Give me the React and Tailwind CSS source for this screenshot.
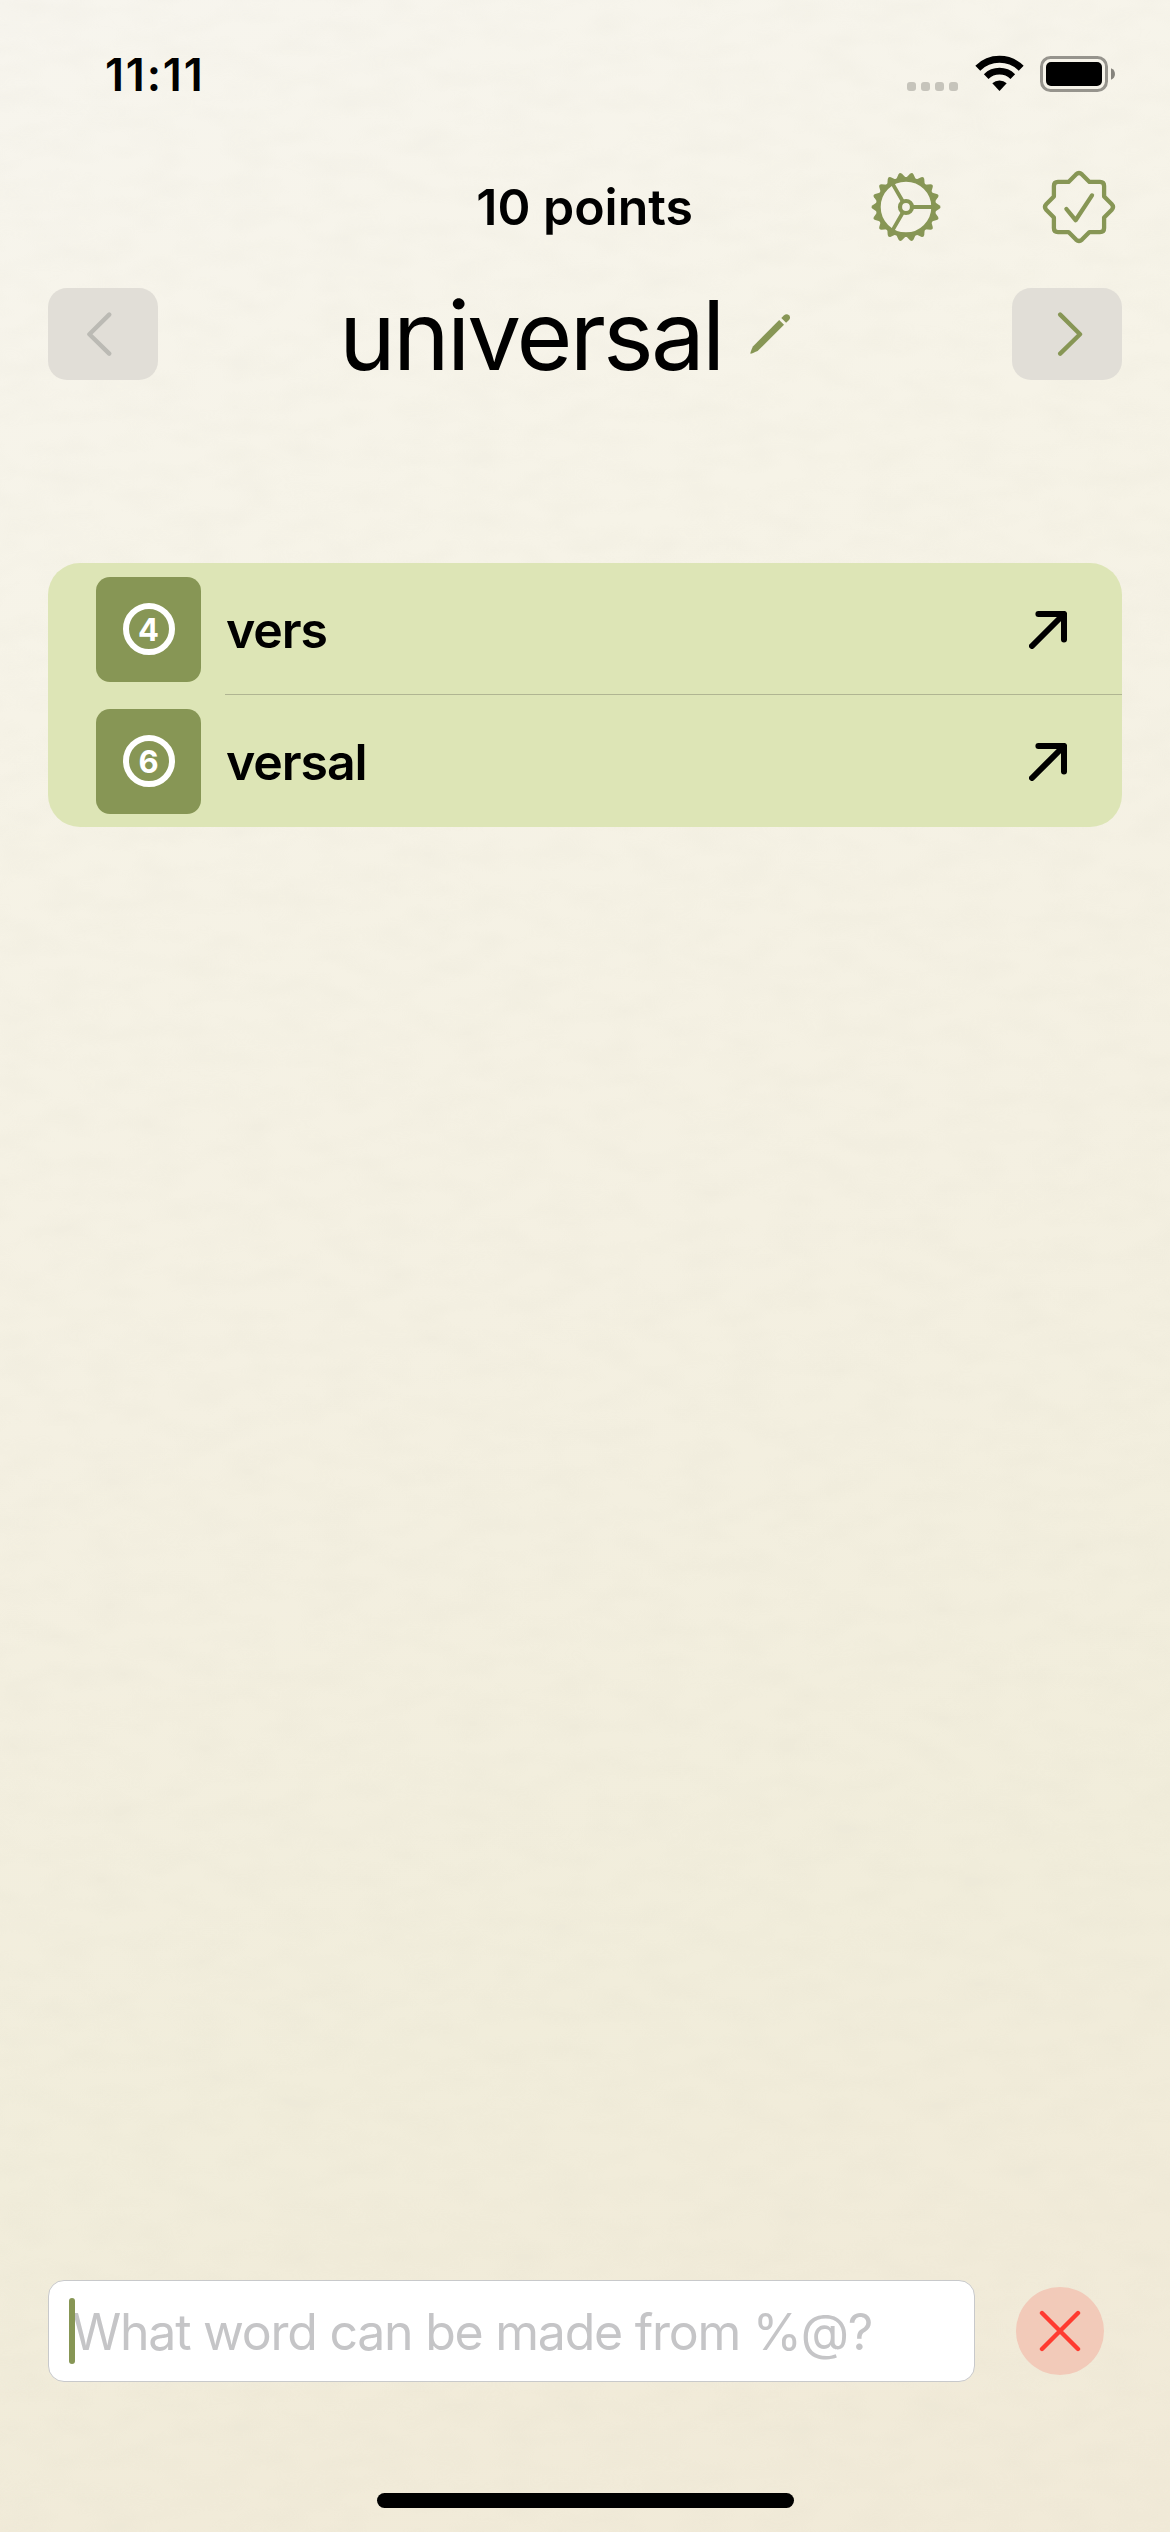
const GREEN = "#879655";

function polar(cx, cy, r, deg) {
  const a = (deg * Math.PI) / 180;
  return [cx + r * Math.cos(a), cy + r * Math.sin(a)];
}

function Paper() {
  return (
    <svg className="absolute inset-0 h-full w-full opacity-6" aria-hidden="true">
      <filter id="paper" x="0" y="0" width="100%" height="100%">
        <feTurbulence type="fractalNoise" baseFrequency="0.022 0.045" numOctaves="2" seed="8" />
        <feColorMatrix values="0 0 0 0 0.62  0 0 0 0 0.6  0 0 0 0 0.5  2.2 0 0 0 -0.8" />
      </filter>
      <rect width="100%" height="100%" filter="url(#paper)" />
    </svg>
  );
}

function Wifi() {
  return (
    <svg className="h-[36px] w-[49px]" viewBox="0 0 49 36" fill="none" stroke="#000">
      <path d="M2.8 13.2a31 31 0 0 1 43.4 0" strokeWidth="7" />
      <path d="M11.2 21.6a19 19 0 0 1 26.6 0" strokeWidth="6.6" />
      <path d="M24.5 36 17.3 28.3a10.5 10.5 0 0 1 14.4 0Z" fill="#000" stroke="none" />
    </svg>
  );
}

function Battery() {
  return (
    <svg className="h-[36px] w-[76px]" viewBox="0 0 76 36" fill="none">
      <rect x="1.5" y="1.5" width="65" height="33" rx="9" stroke="#96948d" strokeWidth="3" />
      <rect x="6" y="6" width="56" height="24" rx="5" fill="#000" />
      <path d="M71 12.2c5.3 2 5.3 9.6 0 11.6Z" fill="#85837c" />
    </svg>
  );
}

function Gear() {
  const teeth = Array.from({ length: 18 }, (_, i) => i * 20);
  const spokes = [0, 120, 240];
  return (
    <svg className="h-[70px] w-[70px]" viewBox="0 0 70 70" fill="none" stroke={GREEN} strokeLinecap="round">
      <circle cx="35" cy="35" r="27.7" strokeWidth="4.8" />
      {teeth.map((t) => (
        <path key={t} d="M64 30.2 L68.4 33.2 Q70.6 35 68.4 36.8 L64 39.8Z" fill={GREEN} stroke="none" transform={`rotate(${t} 35 35)`} />
      ))}
      <circle cx="35" cy="35" r="6" strokeWidth="4.2" />
      {spokes.map((s) => {
        const [x1, y1] = polar(35, 35, 7.5, s);
        const [x2, y2] = polar(35, 35, 27, s);
        return <path key={s} d={`M${x1} ${y1}L${x2} ${y2}`} strokeWidth="3.8" />;
      })}
    </svg>
  );
}

function Seal() {
  return (
    <svg className="h-[74px] w-[74px]" viewBox="-37 -37 74 74" fill="none" stroke={GREEN} strokeWidth="4.3" strokeLinecap="round" strokeLinejoin="round">
      <path d="M-3-32.6Q0-35.4 3-32.6L10.5-25.1H21Q25.1-25.1 25.1-21V-10.5L32.6-3Q35.4 0 32.6 3L25.1 10.5V21Q25.1 25.1 21 25.1H10.5L3 32.6Q0 35.4-3 32.6L-10.5 25.1H-21Q-25.1 25.1-25.1 21V10.5L-32.6 3Q-35.4 0-32.6-3L-25.1-10.5V-21Q-25.1-25.1-21-25.1H-10.5Z" />
      <path d="M-12.6 2 -3.4 13.2 13-11.6" />
    </svg>
  );
}

function Pencil() {
  return (
    <svg className="h-[40px] w-[40px]" viewBox="0 0 40 40" fill={GREEN}>
      <path d="M0.4 39.6Q0 38.6 2.9 32.4L29.2 6 34 10.8 7.6 37.1Q1.4 40 .4 39.6Z" />
      <path d="M31.3 4.1 33.8 1.5Q36.6-.9 39 1.2 41.2 3.6 38.7 6.2L36.1 8.8Z" />
    </svg>
  );
}

function NavButton({ direction, color }) {
  return (
    <button className="flex h-[92px] w-[110px] items-center justify-center rounded-[19px] bg-[#e1ded7]">
      <svg className="h-[44px] w-[34px]" viewBox="0 0 34 44" fill="none" stroke={color} strokeWidth="4.4" strokeLinecap="round" strokeLinejoin="round">
        <path d={direction === "left" ? "M23.2 2.6 3.4 22.2 23.2 41.6" : "M10.2 2.6 30 22.2 10.2 41.6"} />
      </svg>
    </button>
  );
}

function WordRow({ count, word, last }) {
  return (
    <li className="flex h-[132px] pl-12">
      <div className="mt-[14px] flex h-[105px] w-[105px] items-center justify-center rounded-[14px] bg-[#879655]">
        <span className="mb-[1px] flex h-[52px] w-[52px] items-center justify-center rounded-full border-6 border-white text-[31px] leading-none font-bold text-white">
          {count}
        </span>
      </div>
      <div className={last ? "ml-6 flex flex-1 items-center justify-between pt-[2px] pr-[55px]" : "ml-6 flex flex-1 items-center justify-between border-b border-[#b0b592] pt-[3px] pr-[55px]"}>
        <span className="ml-px text-[50px] font-semibold tracking-[-1.1px]">{word}</span>
        <svg className="h-[38px] w-[38px]" viewBox="0 0 38 38" fill="none" stroke="#000" strokeWidth="6" strokeLinecap="round" strokeLinejoin="round">
          <path d="M3 35 35 3M9.4 3H35V28.4" />
        </svg>
      </div>
    </li>
  );
}

export default function App() {
  const words = [
    { count: 4, word: "vers" },
    { count: 6, word: "versal" },
  ];
  return (
    <div className="relative h-[2532px] w-[1170px] overflow-hidden bg-linear-[162deg,#f7f5ee_0%,#f6f3e7_25%,#f4f0e2_50%,#f1eddb_75%,#f1ebd9_88%,#f1ead8_100%] font-['Inter',sans-serif] text-black">
      <Paper />
      <div className="relative flex h-full flex-col">
        <header className="flex h-[150px] items-start justify-between pt-[55px] pr-[54px] pl-[105px]">
          <time className="mt-[-3px] text-[45px] leading-[45px] font-semibold tracking-[1.8px]">11:11</time>
          <div className="flex">
            <div className="mt-[27px] mr-[17px] flex gap-[5px]">
              {[0, 1, 2, 3].map((i) => (
                <span key={i} className="h-[9px] w-[9px] rounded-[3px] bg-[#c6c4bb]" />
              ))}
            </div>
            <Wifi />
            <div className="mt-px ml-[16px]">
              <Battery />
            </div>
          </div>
        </header>

        <div className="flex h-[114px] items-center justify-end pr-[54px]">
          <h2 className="mr-[178px] text-[50px] leading-none font-semibold">10 points</h2>
          <Gear />
          <div className="ml-[101px]">
            <Seal />
          </div>
        </div>

        <div className="mt-[24px] flex h-[92px] items-center px-12">
          <NavButton direction="left" color="#bbbab4" />
          <h1 className="ml-[181px] w-[411px] pt-[2px] text-[96px] leading-[92px] tracking-[-2.8px] whitespace-nowrap">universal</h1>
          <Pencil />
          <div className="ml-auto">
            <NavButton direction="right" color={GREEN} />
          </div>
        </div>

        <ul className="mx-12 mt-[183px] rounded-[32px] bg-[#dde5b6]">
          {words.map((w, i) => (
            <WordRow key={w.word} {...w} last={i === words.length - 1} />
          ))}
        </ul>

        <div className="mt-auto flex items-center pl-12">
          <div className="flex h-[102px] w-[927px] items-center rounded-[16px] border border-[#c8c9cb] bg-white pl-[20px]">
            <span className="z-10 h-[66px] w-[6px] rounded-full bg-[#879655]" />
            <span className="-ml-[3px] pt-[2px] text-[50px] leading-none tracking-[-1.25px] whitespace-nowrap text-[#c5c5c7]">What word can be made from %@?</span>
          </div>
          <button className="ml-[41px] flex h-[88px] w-[88px] items-center justify-center rounded-full bg-[#f2cab9]">
            <svg className="h-[42px] w-[42px]" viewBox="0 0 42 42" fill="none" stroke="#ff3b30" strokeWidth="4.4" strokeLinecap="round">
              <path d="M3 3 39 39M39 3 3 39" />
            </svg>
          </button>
        </div>

        <div className="mt-[111px] mb-6 ml-[377px] h-[15px] w-[417px] rounded-full bg-black" />
      </div>
    </div>
  );
}
